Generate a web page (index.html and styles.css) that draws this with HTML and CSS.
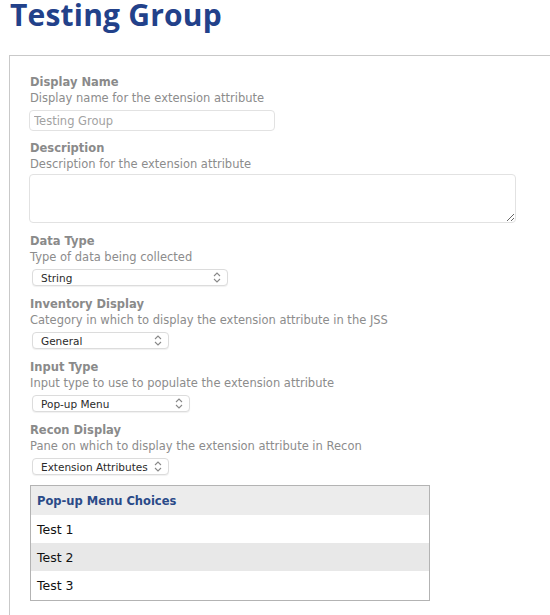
FILE: index.html
```html
<!DOCTYPE html>
<html>
<head>
<meta charset="utf-8">
<link rel="stylesheet" href="styles.css">
</head>
<body>
<h1 class="title">Testing Group</h1>
<div class="panel">
  <div class="field">
    <div class="label">Display Name</div>
    <div class="desc">Display name for the extension attribute</div>
    <input class="text-input" type="text" placeholder="Testing Group">
  </div>
  <div class="field">
    <div class="label">Description</div>
    <div class="desc">Description for the extension attribute</div>
    <textarea class="textarea"></textarea>
  </div>
  <div class="field">
    <div class="label">Data Type</div>
    <div class="desc">Type of data being collected</div>
    <div class="select w-196"><span>String</span><svg class="chev" width="8" height="11" viewBox="0 0 8 11"><path d="M1 4 L4 1 L7 4 M1 7 L4 10 L7 7" fill="none" stroke="#888" stroke-width="1.1"/></svg></div>
  </div>
  <div class="field">
    <div class="label">Inventory Display</div>
    <div class="desc">Category in which to display the extension attribute in the JSS</div>
    <div class="select w-137"><span>General</span><svg class="chev" width="8" height="11" viewBox="0 0 8 11"><path d="M1 4 L4 1 L7 4 M1 7 L4 10 L7 7" fill="none" stroke="#888" stroke-width="1.1"/></svg></div>
  </div>
  <div class="field">
    <div class="label">Input Type</div>
    <div class="desc">Input type to use to populate the extension attribute</div>
    <div class="select w-158"><span>Pop-up Menu</span><svg class="chev" width="8" height="11" viewBox="0 0 8 11"><path d="M1 4 L4 1 L7 4 M1 7 L4 10 L7 7" fill="none" stroke="#888" stroke-width="1.1"/></svg></div>
  </div>
  <div class="field">
    <div class="label">Recon Display</div>
    <div class="desc">Pane on which to display the extension attribute in Recon</div>
    <div class="select w-137"><span>Extension Attributes</span><svg class="chev" width="8" height="11" viewBox="0 0 8 11"><path d="M1 4 L4 1 L7 4 M1 7 L4 10 L7 7" fill="none" stroke="#888" stroke-width="1.1"/></svg></div>
  </div>
  <table class="choices">
    <thead><tr><th>Pop-up Menu Choices</th></tr></thead>
    <tbody>
      <tr><td>Test 1</td></tr>
      <tr class="alt"><td>Test 2</td></tr>
      <tr class="last"><td>Test 3</td></tr>
    </tbody>
  </table>
</div>
</body>
</html>
```
FILE: styles.css
```css
html, body {
  margin: 0;
  padding: 0;
  overflow: hidden;
  background: #fff;
}
body {
  font-family: "DejaVu Sans", "Open Sans", sans-serif;
  width: 550px;
  height: 615px;
}
.title {
  font-family: "Open Sans", sans-serif;
  font-weight: 700;
  font-size: 30px;
  line-height: 30px;
  color: #22418a;
  margin: 0 0 25px 10px;
  letter-spacing: 0.2px;
}
.panel {
  margin-left: 9px;
  margin-right: -30px;
  border-top: 1px solid #c9c9c9;
  border-left: 1px solid #c9c9c9;
  padding: 18px 0 0 20px;
  height: 580px;
}
.field {
  margin-bottom: 10px;
}
.field:first-child {
  margin-bottom: 9px;
}
.label {
  font-weight: 700;
  font-size: 11.5px;
  line-height: 16px;
  color: #8a8a8a;
}
.desc {
  font-size: 11.5px;
  line-height: 16px;
  color: #8c8c8c;
}
.text-input {
  display: block;
  box-sizing: border-box;
  width: 246px;
  height: 21px;
  margin: 4px 0 0 -1px;
  border: 1px solid #e2e2e2;
  border-radius: 4px;
  padding: 0 4px;
  font-family: "DejaVu Sans", sans-serif;
  font-size: 11.5px;
  outline: none;
}
.text-input::placeholder {
  color: #a2a2a2;
}
.textarea {
  display: block;
  box-sizing: border-box;
  width: 487px;
  height: 49px;
  margin: 2px 0 0 -1px;
  border: 1px solid #e2e2e2;
  border-radius: 4px;
  resize: both;
  outline: none;
}
.select {
  box-sizing: border-box;
  height: 17px;
  margin: 4px 0 0 2px;
  border: 1px solid #dcdcdc;
  border-radius: 4px;
  background: #fff;
  box-shadow: 0 1px 1px rgba(0,0,0,0.06);
  display: flex;
  align-items: center;
  justify-content: space-between;
  padding: 0 6px 0 8px;
  font-size: 10.5px;
  color: #2a2a2a;
}
.w-196 { width: 196px; }
.w-137 { width: 137px; }
.w-158 { width: 158px; }
.chev {
  display: block;
}
.choices {
  border-collapse: collapse;
  width: 400px;
  margin-top: 0;
  border: 1px solid #b3b3b3;
}
.choices th {
  background: #ececec;
  color: #2a4a88;
  font-weight: 700;
  font-size: 11.5px;
  text-align: left;
  height: 29px;
  padding: 0 0 0 6px;
}
.choices td {
  font-size: 12.5px;
  color: #111;
  height: 28px;
  padding: 0 0 0 6px;
}
.choices tr.alt td {
  background: #e8e8e8;
}
.choices tr.last td {
  height: 29px;
}
```
